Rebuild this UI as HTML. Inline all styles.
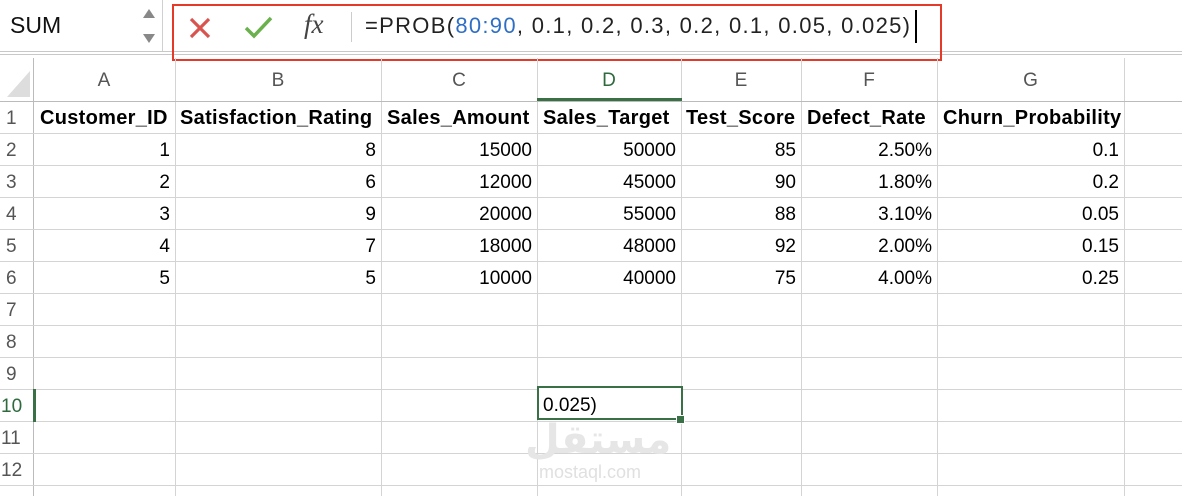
<!DOCTYPE html>
<html><head><meta charset="utf-8"><style>
body{margin:0;width:1182px;height:496px;background:#fff;position:relative;overflow:hidden;font-family:"Liberation Sans",sans-serif;}
.a{position:absolute;}
.vl{position:absolute;top:58px;bottom:0;width:1px;background:#d4d4d4;}
.hl{position:absolute;left:0;right:0;height:1px;background:#d4d4d4;}
.c{position:absolute;height:32px;line-height:33px;font-size:19px;color:#000;white-space:nowrap;}
.r{text-align:right;}
.b{font-weight:bold;font-size:20px;letter-spacing:0.3px;}
.rn{position:absolute;left:0;width:33px;height:32px;line-height:33px;text-align:left;padding-left:6px;box-sizing:border-box;font-size:19px;color:#555;}
.ch{position:absolute;top:58px;height:43px;line-height:46px;text-align:center;font-size:19px;color:#555;}
</style></head><body>
<div class="a" style="left:0;top:51px;width:1182px;height:1px;background:#c8c8c8;"></div>
<div class="a" style="left:0;top:54px;width:1182px;height:1px;background:#c8c8c8;"></div>
<div class="a" style="left:0;top:0;width:162px;height:51px;border-right:1px solid #d0d0d0;"></div>
<div class="a" style="left:10px;top:12px;font-size:23px;color:#111;">SUM</div>
<svg class="a" style="left:140px;top:6px" width="18" height="40"><path d="M3 12 L9 3 L15 12Z" fill="#888"/><path d="M3 28 L9 37 L15 28Z" fill="#888"/></svg>
<div class="a" style="left:172px;top:4px;width:766px;height:53px;border:2px solid #e33a2a;"></div>
<svg class="a" style="left:188px;top:16px" width="24" height="24"><path d="M3 3 L21 21 M21 3 L3 21" stroke="#d9534f" stroke-width="3.2"/></svg>
<svg class="a" style="left:244px;top:15px" width="30" height="24"><path d="M2 13 L10 21 L27 3" stroke="#6ab04c" stroke-width="3.5" fill="none"/></svg>
<div class="a" style="left:304px;top:9px;font-family:'Liberation Serif',serif;font-style:italic;font-size:27px;color:#444;">fx</div>
<div class="a" style="left:351px;top:12px;width:1px;height:30px;background:#ccc;"></div>
<div class="a" style="left:365px;top:13px;font-size:22px;letter-spacing:1.3px;color:#222;white-space:nowrap;">=PROB(<span style="color:#2e6fc5">80:90</span>, 0.1, 0.2, 0.3, 0.2, 0.1, 0.05, 0.025)</div>
<div class="a" style="left:915px;top:10px;width:2px;height:33px;background:#000;"></div>

<svg class="a" style="left:6px;top:70px" width="25" height="28"><path d="M24 1 L24 27 L1 27Z" fill="#ddd"/></svg>
<div class="vl" style="left:33px;background:#bbb"></div>
<div class="vl" style="left:175px"></div><div class="vl" style="left:381px"></div>
<div class="vl" style="left:537px"></div><div class="vl" style="left:681px"></div>
<div class="vl" style="left:801px"></div><div class="vl" style="left:937px"></div>
<div class="vl" style="left:1124px"></div>
<div class="hl" style="top:101px;background:#bbb"></div>
<div class="hl" style="top:133px"></div><div class="hl" style="top:165px"></div>
<div class="hl" style="top:197px"></div><div class="hl" style="top:229px"></div>
<div class="hl" style="top:261px"></div><div class="hl" style="top:293px"></div>
<div class="hl" style="top:325px"></div><div class="hl" style="top:357px"></div>
<div class="hl" style="top:389px"></div><div class="hl" style="top:421px"></div>
<div class="hl" style="top:453px"></div><div class="hl" style="top:485px"></div>
<div class="a" style="left:537px;top:98px;width:145px;height:3px;background:#3a7045;"></div>

<div class="ch" style="left:33px;width:142px">A</div>
<div class="ch" style="left:175px;width:206px">B</div>
<div class="ch" style="left:381px;width:156px">C</div>
<div class="ch" style="left:537px;width:144px;color:#2e6a3e">D</div>
<div class="ch" style="left:681px;width:120px">E</div>
<div class="ch" style="left:801px;width:136px">F</div>
<div class="ch" style="left:937px;width:187px">G</div>

<div class="rn" style="top:102px">1</div><div class="rn" style="top:134px">2</div>
<div class="rn" style="top:166px">3</div><div class="rn" style="top:198px">4</div>
<div class="rn" style="top:230px">5</div><div class="rn" style="top:262px">6</div>
<div class="rn" style="top:294px">7</div><div class="rn" style="top:326px">8</div>
<div class="rn" style="top:358px">9</div>
<div class="rn" style="top:390px;color:#2e6a3e;padding-left:1px">10</div>
<div class="a" style="left:33px;top:389px;width:3px;height:33px;background:#3a7045"></div>
<div class="rn" style="top:422px;padding-left:1px">11</div><div class="rn" style="top:454px;padding-left:1px">12</div>

<div class="c b" style="left:40px;top:102px">Customer_ID</div>
<div class="c b" style="left:180px;top:102px">Satisfaction_Rating</div>
<div class="c b" style="left:387px;top:102px">Sales_Amount</div>
<div class="c b" style="left:543px;top:102px">Sales_Target</div>
<div class="c b" style="left:686px;top:102px">Test_Score</div>
<div class="c b" style="left:807px;top:102px">Defect_Rate</div>
<div class="c b" style="left:943px;top:102px">Churn_Probability</div>

<div class="c r" style="left:33px;width:137px;top:134px">1</div><div class="c r" style="left:175px;width:201px;top:134px">8</div><div class="c r" style="left:381px;width:151px;top:134px">15000</div><div class="c r" style="left:537px;width:139px;top:134px">50000</div><div class="c r" style="left:681px;width:115px;top:134px">85</div><div class="c r" style="left:801px;width:131px;top:134px">2.50%</div><div class="c r" style="left:937px;width:182px;top:134px">0.1</div>
<div class="c r" style="left:33px;width:137px;top:166px">2</div><div class="c r" style="left:175px;width:201px;top:166px">6</div><div class="c r" style="left:381px;width:151px;top:166px">12000</div><div class="c r" style="left:537px;width:139px;top:166px">45000</div><div class="c r" style="left:681px;width:115px;top:166px">90</div><div class="c r" style="left:801px;width:131px;top:166px">1.80%</div><div class="c r" style="left:937px;width:182px;top:166px">0.2</div>
<div class="c r" style="left:33px;width:137px;top:198px">3</div><div class="c r" style="left:175px;width:201px;top:198px">9</div><div class="c r" style="left:381px;width:151px;top:198px">20000</div><div class="c r" style="left:537px;width:139px;top:198px">55000</div><div class="c r" style="left:681px;width:115px;top:198px">88</div><div class="c r" style="left:801px;width:131px;top:198px">3.10%</div><div class="c r" style="left:937px;width:182px;top:198px">0.05</div>
<div class="c r" style="left:33px;width:137px;top:230px">4</div><div class="c r" style="left:175px;width:201px;top:230px">7</div><div class="c r" style="left:381px;width:151px;top:230px">18000</div><div class="c r" style="left:537px;width:139px;top:230px">48000</div><div class="c r" style="left:681px;width:115px;top:230px">92</div><div class="c r" style="left:801px;width:131px;top:230px">2.00%</div><div class="c r" style="left:937px;width:182px;top:230px">0.15</div>
<div class="c r" style="left:33px;width:137px;top:262px">5</div><div class="c r" style="left:175px;width:201px;top:262px">5</div><div class="c r" style="left:381px;width:151px;top:262px">10000</div><div class="c r" style="left:537px;width:139px;top:262px">40000</div><div class="c r" style="left:681px;width:115px;top:262px">75</div><div class="c r" style="left:801px;width:131px;top:262px">4.00%</div><div class="c r" style="left:937px;width:182px;top:262px">0.25</div>

<div class="a" style="left:537px;top:386px;width:146px;height:34px;border:2px solid #3a7045;box-sizing:border-box;background:#fff"></div>
<div class="a" style="left:676px;top:415px;width:7px;height:7px;background:#3a7045;border:1px solid #fff"></div>
<div class="c" style="left:543px;top:389px">0.025)</div>

<div class="a" style="left:525px;top:420px;width:130px;text-align:center;font-size:40px;font-weight:bold;color:#e6e6e6;line-height:40px;font-family:'Liberation Sans','DejaVu Sans',sans-serif;">مستقل</div>
<div class="a" style="left:525px;top:462px;width:130px;text-align:center;font-size:18px;color:#e0e0e0;">mostaql.com</div>
</body></html>
